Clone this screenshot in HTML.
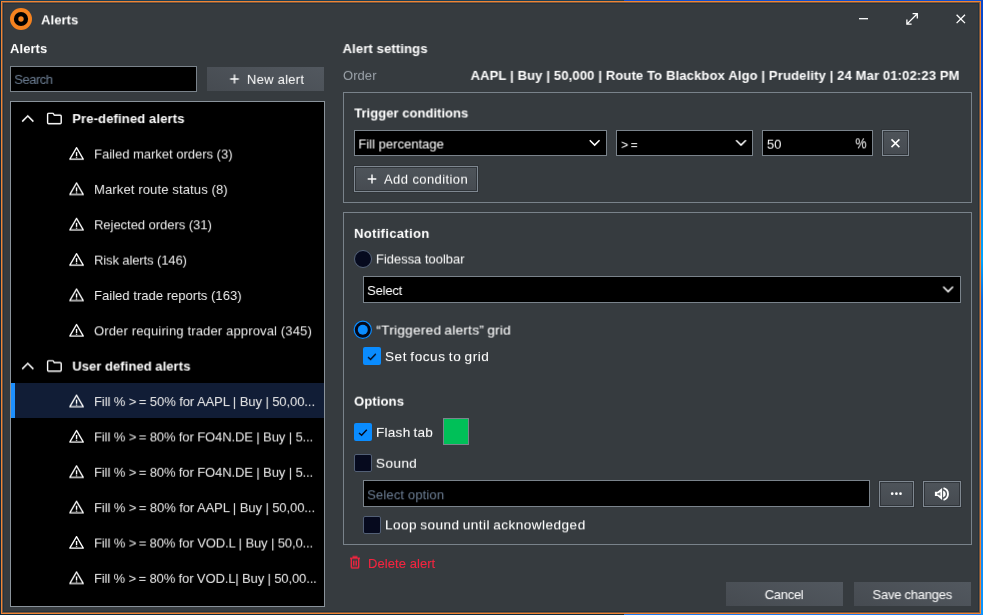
<!DOCTYPE html>
<html>
<head>
<meta charset="utf-8">
<title>Alerts</title>
<style>
*{box-sizing:border-box;margin:0;padding:0}
html,body{width:983px;height:615px;overflow:hidden;background:#0a4fc8}
body{position:relative;font-family:"Liberation Sans",sans-serif;font-size:13px;color:#fff}
.abs{position:absolute}
#outer{position:absolute;left:0;top:0;width:983px;height:615px;background:#13283c}
#otop{position:absolute;left:0;top:0;width:624px;height:1px;background:#1e4058}
#otopr{position:absolute;left:624px;top:0;width:359px;height:1px;background:#0f4fd0}
#obot{position:absolute;left:0;top:614px;width:624px;height:1px;background:#0a2a40}
#obotr{position:absolute;left:624px;top:614px;width:359px;height:1px;background:#1a78f0}
#oright{position:absolute;left:981px;top:0;width:2px;height:615px;background:linear-gradient(180deg,#0a46c8 0,#0a55d6 120px,#0a8cf0 200px,#00a4ff 260px,#0a6ae0 300px,#1878e8 450px,#0a96ff 615px)}
#frame{position:absolute;left:1px;top:1px;width:980px;height:613px;background:#ee8535}
#half{position:absolute;left:2px;top:2px;width:978px;height:611px;background:#7e563a}
#win{position:absolute;left:3px;top:3px;width:976px;height:609px;background:#363b3f;box-shadow:inset 0 0 0 1px #22333f}
.t{will-change:transform;position:absolute;white-space:nowrap;line-height:20px;height:20px;font-size:13px;color:#fff}
.b{font-weight:bold}
.g{color:#9aa1a8}
.l2{font-size:14px}
.box{position:absolute;background:#000;border:1px solid #7a838b}
.btn{position:absolute;background:linear-gradient(180deg,#4e545a,#464b51);border:1px solid #7f8891;box-shadow:inset 0 0 0 1px rgba(40,44,49,.75),0 0 0 1px rgba(30,33,37,.25)}
.btnf{position:absolute;background:linear-gradient(200deg,#52585f,#464b51)}
.panel{position:absolute;border:1px solid #79828a}
.row{position:absolute;left:11px;width:313px;height:35.3px}
svg{position:absolute;overflow:visible}
.cb{position:absolute;width:18px;height:18px;border-radius:2px}
.cb.on{background:#0a8cff}
.cb.off{background:#060a1e;border:1px solid #525f75}
</style>
</head>
<body>
<div id="outer"></div><div id="otop"></div><div id="otopr"></div><div id="obot"></div><div id="obotr"></div><div id="oright"></div>
<div id="frame"></div><div id="half"></div>
<div id="win"></div>

<!-- title bar -->
<svg style="left:10px;top:8px" width="22" height="22" viewBox="0 0 22 22"><circle cx="11" cy="11" r="11" fill="#f5821f"/><circle cx="11" cy="11" r="7.1" fill="#000"/><circle cx="11" cy="11" r="2.7" fill="#f5821f"/></svg>
<svg style="left:855px;top:10px" width="18" height="18" viewBox="0 0 18 18"><path d="M4 8.7H13" stroke="#fff" stroke-width="1.3" fill="none"/></svg>
<svg style="left:903px;top:10px" width="18" height="18" viewBox="0 0 18 18"><path d="M3.9 14.1L14.3 3.7M9.6 3.7H14.3V8.4M3.9 9.4V14.1H8.6" stroke="#fff" stroke-width="1.3" fill="none"/></svg>
<svg style="left:952px;top:10px" width="18" height="18" viewBox="0 0 18 18"><path d="M4.6 4.7L13 13.1M13 4.7L4.6 13.1" stroke="#fff" stroke-width="1.3" fill="none"/></svg>

<!-- left column -->
<div class="box" style="left:10px;top:66px;width:187px;height:26px"></div>
<div class="btnf" style="left:207px;top:67px;width:117px;height:24px"></div>
<svg style="left:229px;top:74px;will-change:transform;transform:translate(0.50px,0.00px) rotate(0.0001deg);transform-origin:0 0" width="10" height="10" viewBox="0 0 10 10"><path d="M5 0.4V9.6M0.7 5H9.3" stroke="#fff" stroke-width="1.4" fill="none"/></svg>

<div class="box" id="tree" style="left:10px;top:101px;width:315px;height:506px;border-color:#8a939b"></div>
<svg style="left:21px;top:113px;will-change:transform;transform:translate(0.00px,0.90px) rotate(0.0001deg);transform-origin:0 0" width="14" height="10" viewBox="0 0 14 10"><path d="M1.2 7.6L6.8 2L12.4 7.6" stroke="#fff" stroke-width="1.5" fill="none"/></svg>
<svg style="left:46px;top:111px;will-change:transform;transform:translate(0.00px,0.90px) rotate(0.0001deg);transform-origin:0 0" width="17" height="14" viewBox="0 0 17 14"><path d="M1.6 2.4Q1.6 1.4 2.6 1.4H6.6Q7.3 1.4 7.7 2.2L8.2 3.3H14.2Q15.2 3.3 15.2 4.3V10.8Q15.2 11.8 14.2 11.8H2.6Q1.6 11.8 1.6 10.8Z" stroke="#fff" stroke-width="1.4" fill="none" stroke-linejoin="round"/></svg>
<svg style="left:68px;top:146px;will-change:transform;transform:translate(0.00px,0.10px) rotate(0.0001deg);transform-origin:0 0" width="17" height="15" viewBox="0 0 17 15"><path d="M8.55 1.6L15.3 13.1H1.8Z" stroke="#fff" stroke-width="1.3" fill="none" stroke-linejoin="round"/><path d="M8.55 6.1V10.25M8.55 10.95V11.85" stroke="#fff" stroke-width="1.4" fill="none"/></svg>
<svg style="left:68px;top:181px;will-change:transform;transform:translate(0.00px,0.40px) rotate(0.0001deg);transform-origin:0 0" width="17" height="15" viewBox="0 0 17 15"><path d="M8.55 1.6L15.3 13.1H1.8Z" stroke="#fff" stroke-width="1.3" fill="none" stroke-linejoin="round"/><path d="M8.55 6.1V10.25M8.55 10.95V11.85" stroke="#fff" stroke-width="1.4" fill="none"/></svg>
<svg style="left:68px;top:216px;will-change:transform;transform:translate(0.00px,0.80px) rotate(0.0001deg);transform-origin:0 0" width="17" height="15" viewBox="0 0 17 15"><path d="M8.55 1.6L15.3 13.1H1.8Z" stroke="#fff" stroke-width="1.3" fill="none" stroke-linejoin="round"/><path d="M8.55 6.1V10.25M8.55 10.95V11.85" stroke="#fff" stroke-width="1.4" fill="none"/></svg>
<svg style="left:68px;top:252px;will-change:transform;transform:translate(0.00px,0.10px) rotate(0.0001deg);transform-origin:0 0" width="17" height="15" viewBox="0 0 17 15"><path d="M8.55 1.6L15.3 13.1H1.8Z" stroke="#fff" stroke-width="1.3" fill="none" stroke-linejoin="round"/><path d="M8.55 6.1V10.25M8.55 10.95V11.85" stroke="#fff" stroke-width="1.4" fill="none"/></svg>
<svg style="left:68px;top:287px;will-change:transform;transform:translate(0.00px,0.50px) rotate(0.0001deg);transform-origin:0 0" width="17" height="15" viewBox="0 0 17 15"><path d="M8.55 1.6L15.3 13.1H1.8Z" stroke="#fff" stroke-width="1.3" fill="none" stroke-linejoin="round"/><path d="M8.55 6.1V10.25M8.55 10.95V11.85" stroke="#fff" stroke-width="1.4" fill="none"/></svg>
<svg style="left:68px;top:322px;will-change:transform;transform:translate(0.00px,0.90px) rotate(0.0001deg);transform-origin:0 0" width="17" height="15" viewBox="0 0 17 15"><path d="M8.55 1.6L15.3 13.1H1.8Z" stroke="#fff" stroke-width="1.3" fill="none" stroke-linejoin="round"/><path d="M8.55 6.1V10.25M8.55 10.95V11.85" stroke="#fff" stroke-width="1.4" fill="none"/></svg>
<svg style="left:21px;top:361px;will-change:transform;transform:translate(0.00px,0.40px) rotate(0.0001deg);transform-origin:0 0" width="14" height="10" viewBox="0 0 14 10"><path d="M1.2 7.6L6.8 2L12.4 7.6" stroke="#fff" stroke-width="1.5" fill="none"/></svg>
<svg style="left:46px;top:359px;will-change:transform;transform:translate(0.00px,0.40px) rotate(0.0001deg);transform-origin:0 0" width="17" height="14" viewBox="0 0 17 14"><path d="M1.6 2.4Q1.6 1.4 2.6 1.4H6.6Q7.3 1.4 7.7 2.2L8.2 3.3H14.2Q15.2 3.3 15.2 4.3V10.8Q15.2 11.8 14.2 11.8H2.6Q1.6 11.8 1.6 10.8Z" stroke="#fff" stroke-width="1.4" fill="none" stroke-linejoin="round"/></svg>
<div class="abs" style="left:11px;top:383.0px;width:313px;height:35px;background:#111d36"></div>
<div class="abs" style="left:11px;top:383.0px;width:4px;height:35px;background:#1e90ff"></div>
<svg style="left:68px;top:393px;will-change:transform;transform:translate(0.00px,0.60px) rotate(0.0001deg);transform-origin:0 0" width="17" height="15" viewBox="0 0 17 15"><path d="M8.55 1.6L15.3 13.1H1.8Z" stroke="#fff" stroke-width="1.3" fill="none" stroke-linejoin="round"/><path d="M8.55 6.1V10.25M8.55 10.95V11.85" stroke="#fff" stroke-width="1.4" fill="none"/></svg>
<svg style="left:68px;top:428px;will-change:transform;transform:translate(0.00px,0.90px) rotate(0.0001deg);transform-origin:0 0" width="17" height="15" viewBox="0 0 17 15"><path d="M8.55 1.6L15.3 13.1H1.8Z" stroke="#fff" stroke-width="1.3" fill="none" stroke-linejoin="round"/><path d="M8.55 6.1V10.25M8.55 10.95V11.85" stroke="#fff" stroke-width="1.4" fill="none"/></svg>
<svg style="left:68px;top:464px;will-change:transform;transform:translate(0.00px,0.30px) rotate(0.0001deg);transform-origin:0 0" width="17" height="15" viewBox="0 0 17 15"><path d="M8.55 1.6L15.3 13.1H1.8Z" stroke="#fff" stroke-width="1.3" fill="none" stroke-linejoin="round"/><path d="M8.55 6.1V10.25M8.55 10.95V11.85" stroke="#fff" stroke-width="1.4" fill="none"/></svg>
<svg style="left:68px;top:499px;will-change:transform;transform:translate(0.00px,0.70px) rotate(0.0001deg);transform-origin:0 0" width="17" height="15" viewBox="0 0 17 15"><path d="M8.55 1.6L15.3 13.1H1.8Z" stroke="#fff" stroke-width="1.3" fill="none" stroke-linejoin="round"/><path d="M8.55 6.1V10.25M8.55 10.95V11.85" stroke="#fff" stroke-width="1.4" fill="none"/></svg>
<svg style="left:68px;top:535.0px" width="17" height="15" viewBox="0 0 17 15"><path d="M8.55 1.6L15.3 13.1H1.8Z" stroke="#fff" stroke-width="1.3" fill="none" stroke-linejoin="round"/><path d="M8.55 6.1V10.25M8.55 10.95V11.85" stroke="#fff" stroke-width="1.4" fill="none"/></svg>
<svg style="left:68px;top:570px;will-change:transform;transform:translate(0.00px,0.40px) rotate(0.0001deg);transform-origin:0 0" width="17" height="15" viewBox="0 0 17 15"><path d="M8.55 1.6L15.3 13.1H1.8Z" stroke="#fff" stroke-width="1.3" fill="none" stroke-linejoin="round"/><path d="M8.55 6.1V10.25M8.55 10.95V11.85" stroke="#fff" stroke-width="1.4" fill="none"/></svg>

<!-- right column -->

<div class="panel" style="left:343px;top:92px;width:629px;height:111px"></div>
<div class="box" style="left:354px;top:130px;width:253px;height:26px"></div>
<svg style="left:589px;top:139px" width="12" height="8" viewBox="0 0 12 8"><path d="M0.75 1.2L5.65 6.1L10.55 1.2" stroke="#fff" stroke-width="1.5" fill="none"/></svg>
<div class="box" style="left:616px;top:130px;width:137px;height:26px"></div>
<svg style="left:735px;top:139px;will-change:transform;transform:translate(0.40px,0.00px) rotate(0.0001deg);transform-origin:0 0" width="12" height="8" viewBox="0 0 12 8"><path d="M0.75 1.2L5.65 6.1L10.55 1.2" stroke="#fff" stroke-width="1.5" fill="none"/></svg>
<div class="box" style="left:762px;top:130px;width:111px;height:26px"></div>
<div class="btn" style="left:882px;top:130px;width:27px;height:26px"></div>
<svg style="left:890px;top:138px" width="11" height="11" viewBox="0 0 11 11"><path d="M1.5 1.4L9.4 9.1M9.4 1.4L1.5 9.1" stroke="#fff" stroke-width="1.5" fill="none"/></svg>
<div class="btn" style="left:354px;top:165.5px;width:124px;height:26.5px"></div>
<svg style="left:367px;top:174px" width="10" height="10" viewBox="0 0 10 10"><path d="M5 0.4V9.6M0.7 5H9.3" stroke="#fff" stroke-width="1.4" fill="none"/></svg>

<div class="panel" style="left:343px;top:212px;width:629px;height:333px"></div>
<div class="abs" style="left:354px;top:250px;width:18px;height:18px;border-radius:50%;background:#060a1e;border:1px solid #56647a"></div>
<div class="box" style="left:363px;top:276px;width:598px;height:27px"></div>
<svg style="left:942px;top:285px;will-change:transform;transform:translate(0.50px,0.50px) rotate(0.0001deg);transform-origin:0 0" width="12" height="8" viewBox="0 0 12 8"><path d="M0.75 1.2L5.65 6.1L10.55 1.2" stroke="#fff" stroke-width="1.5" fill="none"/></svg>
<svg style="left:353px;top:320px" width="20" height="20" viewBox="0 0 20 20"><circle cx="9.8" cy="9.8" r="8.6" fill="#050818" stroke="#0a8cff" stroke-width="1.2"/><circle cx="9.8" cy="9.8" r="5" fill="#0a8cff"/></svg>
<div class="cb on" style="left:363px;top:347px"></div>
<svg style="left:363px;top:347px;will-change:transform;transform:translate(0.00px,0.20px) rotate(0.0001deg);transform-origin:0 0" width="18" height="18" viewBox="0 0 18 18"><path d="M5 9.9L7.6 12.2L12.8 6.7" stroke="#05081a" stroke-width="1.4" fill="none"/></svg>

<div class="cb on" style="left:354px;top:423px"></div>
<svg style="left:354px;top:423px" width="18" height="18" viewBox="0 0 18 18"><path d="M5 9.9L7.6 12.2L12.8 6.7" stroke="#05081a" stroke-width="1.4" fill="none"/></svg>
<div class="abs" style="left:443px;top:418px;width:26px;height:27px;background:#00c058;border:1px solid #7b848c"></div>
<div class="cb off" style="left:354px;top:454px"></div>
<div class="box" style="left:363px;top:480px;width:507px;height:27px"></div>
<div class="btn" style="left:879px;top:481px;width:35px;height:26px"></div>
<svg style="left:888px;top:490px" width="18" height="8" viewBox="0 0 18 8"><circle cx="4.2" cy="3.7" r="1.35" fill="#fff"/><circle cx="8.4" cy="3.7" r="1.35" fill="#fff"/><circle cx="12.5" cy="3.7" r="1.35" fill="#fff"/></svg>
<div class="btn" style="left:923px;top:481px;width:38px;height:26px"></div>
<svg style="left:934px;top:486px" width="17" height="16" viewBox="0 0 17 16"><path d="M0.9 5.8H3.5L8.1 1.9V14.1L3.5 9.9H0.9Z" fill="#fff"/><path d="M3.2 7.2H4.4L6.4 5.9V10.1L4.4 8.8H3.2Z" fill="#4a5056" opacity=".8"/><path d="M9.1 4.6A3.5 3.5 0 0 1 9.1 11.4Z" fill="#fff"/><path d="M9.5 2.2A6 6 0 0 1 9.5 13.8" fill="none" stroke="#fff" stroke-width="1.9"/></svg>
<div class="cb off" style="left:363px;top:516px"></div>

<svg style="left:349px;top:555px;will-change:transform;transform:translate(0.00px,0.60px) rotate(0.0001deg);transform-origin:0 0" width="12" height="14" viewBox="0 0 12 14"><path d="M1 2.6H11M4.2 2.4V1.2H7.8V2.4M2.3 2.9V11.5Q2.3 12.2 3 12.2H9Q9.7 12.2 9.7 11.5V2.9M4.8 5V10M7.2 5V10" fill="none" stroke="#f3243f" stroke-width="1.35"/></svg>

<div class="btnf" style="left:726px;top:582px;width:117px;height:24px"></div>
<div class="btnf" style="left:854px;top:582px;width:117px;height:24px"></div>

<div id="title" class="t b" style="left:41px;top:10px;transform:translate(0.10px,0.40px) rotate(0.0001deg);transform-origin:0 0;letter-spacing:0.068px">Alerts</div>
<div id="hAlerts" class="t b" style="left:10px;top:39px;transform:translate(0.00px,0.10px) rotate(0.0001deg);transform-origin:0 0;letter-spacing:0.068px">Alerts</div>
<div id="search" class="t" style="left:14px;top:69px;transform:translate(0.30px,0.90px) rotate(0.0001deg);transform-origin:0 0;letter-spacing:-0.501px;color:#6d7f95">Search</div>
<div id="newalert" class="t" style="left:246px;top:69px;transform:translate(0.90px,0.90px) rotate(0.0001deg);transform-origin:0 0;letter-spacing:0.260px">New alert</div>
<div id="hSettings" class="t b" style="left:342px;top:39px;transform:translate(0.60px,0.10px) rotate(0.0001deg);transform-origin:0 0;letter-spacing:0.140px">Alert settings</div>
<div id="order" class="t" style="left:343px;top:65px;transform:translate(0.00px,0.90px) rotate(0.0001deg);transform-origin:0 0;letter-spacing:0.066px;color:#9aa1a8">Order</div>
<div id="orderval" class="t b" style="left:470px;top:65px;transform:translate(0.60px,0.90px) rotate(0.0001deg);transform-origin:0 0;letter-spacing:0.142px">AAPL | Buy | 50,000 | Route To Blackbox Algo | Prudelity | 24 Mar 01:02:23 PM</div>
<div id="trigger" class="t b" style="left:354px;top:103px;transform:translate(0.30px,0.50px) rotate(0.0001deg);transform-origin:0 0;letter-spacing:0.035px">Trigger conditions</div>
<div id="fillpct" class="t" style="left:358px;top:134px;transform:translate(0.40px,0.50px) rotate(0.0001deg);transform-origin:0 0;letter-spacing:0.016px">Fill percentage</div>
<div id="gte" class="t" style="left:621px;top:135px;transform:translate(0.20px,0.14px) rotate(0.0001deg);transform-origin:0 0;font-size:12px;letter-spacing:-0.425px"><span style="letter-spacing:2.6px">&gt;</span>=</div>
<div id="fifty" class="t" style="left:766px;top:134px;transform:translate(0.90px,0.70px) rotate(0.0001deg);transform-origin:0 0;letter-spacing:-0.069px">50</div>
<div id="pct" class="t" style="left:855px;top:133px;transform:translate(0.40px,0.38px) rotate(0.0001deg) scaleX(0.86);transform-origin:0 0;font-size:14.5px;letter-spacing:-0.099px">%</div>
<div id="addcond" class="t" style="left:384px;top:169px;transform:translate(0.00px,0.70px) rotate(0.0001deg);transform-origin:0 0;letter-spacing:0.410px">Add condition</div>
<div id="notif" class="t b" style="left:354px;top:223px;transform:translate(0.10px,0.90px) rotate(0.0001deg);transform-origin:0 0;letter-spacing:0.327px">Notification</div>
<div id="fidessa" class="t" style="left:375px;top:249px;transform:translate(0.90px,0.50px) rotate(0.0001deg);transform-origin:0 0;letter-spacing:-0.028px">Fidessa toolbar</div>
<div id="select" class="t" style="left:367px;top:280px;transform:translate(0.20px,1.00px) rotate(0.0001deg);transform-origin:0 0;letter-spacing:-0.208px">Select</div>
<div id="triggered" class="t" style="left:376px;top:320px;transform:translate(0.40px,0.59px) rotate(0.0001deg);transform-origin:0 0;font-size:13.6px;letter-spacing:0.282px;word-spacing:-1.0px;-webkit-text-stroke:0.05px">“Triggered alerts” grid</div>
<div id="setfocus" class="t" style="left:385px;top:347px;transform:translate(0.00px,0.09px) rotate(0.0001deg);transform-origin:0 0;font-size:13.6px;letter-spacing:0.542px;word-spacing:-1.0px;-webkit-text-stroke:0.05px">Set focus to grid</div>
<div id="options" class="t b" style="left:354px;top:391px;transform:translate(0.10px,0.70px) rotate(0.0001deg);transform-origin:0 0;letter-spacing:0.132px">Options</div>
<div id="flash" class="t" style="left:376px;top:422px;transform:translate(0.00px,0.89px) rotate(0.0001deg);transform-origin:0 0;font-size:13.6px;letter-spacing:0.247px;word-spacing:-1.0px;-webkit-text-stroke:0.05px">Flash tab</div>
<div id="sound" class="t" style="left:375px;top:453px;transform:translate(0.90px,0.79px) rotate(0.0001deg);transform-origin:0 0;font-size:13.6px;letter-spacing:0.397px;word-spacing:-1.0px;-webkit-text-stroke:0.05px">Sound</div>
<div id="selopt" class="t" style="left:367px;top:485px;transform:translate(0.20px,0.30px) rotate(0.0001deg);transform-origin:0 0;letter-spacing:0.152px;color:#6d7f95">Select option</div>
<div id="loop" class="t" style="left:385px;top:515px;transform:translate(0.00px,0.39px) rotate(0.0001deg);transform-origin:0 0;font-size:13.6px;letter-spacing:0.455px;word-spacing:-1.0px;-webkit-text-stroke:0.05px">Loop sound until acknowledged</div>
<div id="delete" class="t" style="left:368px;top:553px;transform:translate(0.00px,1.00px) rotate(0.0001deg);transform-origin:0 0;letter-spacing:0.065px;color:#f3243f;-webkit-text-stroke:0.1px">Delete alert</div>
<div id="cancel" class="t" style="left:764px;top:585px;transform:translate(0.70px,0.10px) rotate(0.0001deg);transform-origin:0 0;letter-spacing:-0.294px">Cancel</div>
<div id="save" class="t" style="left:872px;top:585px;transform:translate(0.50px,0.10px) rotate(0.0001deg);transform-origin:0 0;letter-spacing:-0.246px">Save changes</div>
<div id="row0" class="t b" style="left:72px;top:109px;transform:translate(0.30px,0.10px) rotate(0.0001deg);transform-origin:0 0;letter-spacing:0.145px">Pre-defined alerts</div>
<div id="row1" class="t" style="left:94px;top:144px;transform:translate(0.10px,0.56px) rotate(0.0001deg);transform-origin:0 0;letter-spacing:-0.010px;color:#ececec">Failed market orders (3)</div>
<div id="row2" class="t" style="left:94px;top:179px;transform:translate(0.10px,0.92px) rotate(0.0001deg);transform-origin:0 0;letter-spacing:0.133px;color:#ececec">Market route status (8)</div>
<div id="row3" class="t" style="left:94px;top:215px;transform:translate(0.10px,0.28px) rotate(0.0001deg);transform-origin:0 0;letter-spacing:-0.037px;color:#ececec">Rejected orders (31)</div>
<div id="row4" class="t" style="left:94px;top:250px;transform:translate(0.10px,0.64px) rotate(0.0001deg);transform-origin:0 0;letter-spacing:-0.109px;color:#ececec">Risk alerts (146)</div>
<div id="row5" class="t" style="left:94px;top:285px;transform:translate(0.10px,1.00px) rotate(0.0001deg);transform-origin:0 0;letter-spacing:0.032px;color:#ececec">Failed trade reports (163)</div>
<div id="row6" class="t" style="left:94px;top:321px;transform:translate(0.10px,0.36px) rotate(0.0001deg);transform-origin:0 0;letter-spacing:0.149px;color:#ececec">Order requiring trader approval (345)</div>
<div id="row7" class="t b" style="left:72px;top:356px;transform:translate(0.30px,0.62px) rotate(0.0001deg);transform-origin:0 0;letter-spacing:0.059px">User defined alerts</div>
<div id="row8" class="t" style="left:94px;top:392px;transform:translate(0.10px,0.08px) rotate(0.0001deg);transform-origin:0 0;letter-spacing:-0.082px;color:#ececec">Fill % <span style="letter-spacing:2.4px">&gt;</span>= 50% for AAPL | Buy | 50,00...</div>
<div id="row9" class="t" style="left:94px;top:427px;transform:translate(0.10px,0.44px) rotate(0.0001deg);transform-origin:0 0;letter-spacing:-0.106px;color:#ececec">Fill % <span style="letter-spacing:2.4px">&gt;</span>= 80% for FO4N.DE | Buy | 5...</div>
<div id="row10" class="t" style="left:94px;top:462px;transform:translate(0.10px,0.80px) rotate(0.0001deg);transform-origin:0 0;letter-spacing:-0.106px;color:#ececec">Fill % <span style="letter-spacing:2.4px">&gt;</span>= 80% for FO4N.DE | Buy | 5...</div>
<div id="row11" class="t" style="left:94px;top:498px;transform:translate(0.10px,0.16px) rotate(0.0001deg);transform-origin:0 0;letter-spacing:-0.082px;color:#ececec">Fill % <span style="letter-spacing:2.4px">&gt;</span>= 80% for AAPL | Buy | 50,00...</div>
<div id="row12" class="t" style="left:94px;top:533px;transform:translate(0.10px,0.52px) rotate(0.0001deg);transform-origin:0 0;letter-spacing:-0.110px;color:#ececec">Fill % <span style="letter-spacing:2.4px">&gt;</span>= 80% for VOD.L | Buy | 50,0...</div>
<div id="row13" class="t" style="left:94px;top:568px;transform:translate(0.10px,0.88px) rotate(0.0001deg);transform-origin:0 0;letter-spacing:-0.126px;color:#ececec">Fill % <span style="letter-spacing:2.4px">&gt;</span>= 80% for VOD.L| Buy | 50,00...</div>
</body>
</html>
